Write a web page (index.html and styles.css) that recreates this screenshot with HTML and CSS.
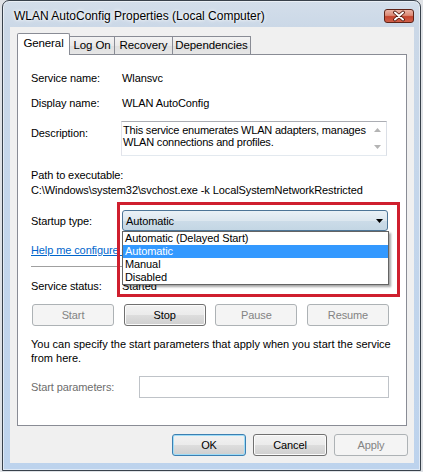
FILE: index.html
```html
<!DOCTYPE html>
<html>
<head>
<meta charset="utf-8">
<title>WLAN AutoConfig Properties</title>
<link rel="stylesheet" href="styles.css">
</head>
<body>
<div class="win">
  <div class="titlebar">
    <div class="title">WLAN AutoConfig Properties (Local Computer)</div>
    <div class="close">
      <svg width="28" height="12" viewBox="0 0 28 12">
        <path d="M10 2.5 L18 9.5 M18 2.5 L10 9.5" stroke="#4a1208" stroke-width="3.6" stroke-linecap="round" fill="none"/>
        <path d="M10 2.5 L18 9.5 M18 2.5 L10 9.5" stroke="#ffffff" stroke-width="2" stroke-linecap="round" fill="none"/>
      </svg>
    </div>
  </div>
  <div class="client">
    <div class="tabs">
      <div class="tab sel t1">General</div>
      <div class="tab t2">Log On</div>
      <div class="tab t3">Recovery</div>
      <div class="tab t4">Dependencies</div>
    </div>
    <div class="panel">
      <div class="row h16"><span class="lbl">Service name:</span><span>Wlansvc</span></div>
      <div class="row h16 r2"><span class="lbl">Display name:</span><span>WLAN AutoConfig</span></div>
      <div class="row desc-row">
        <span class="lbl">Description:</span>
        <div class="desc">
          <div class="desc-text">This service enumerates WLAN adapters, manages<br>WLAN connections and profiles.</div>
          <div class="vscroll">
            <svg width="7" height="4" viewBox="0 0 7 4"><polygon points="0,4 7,4 3.5,0" fill="#b4b4b4"/></svg>
            <svg width="7" height="4" viewBox="0 0 7 4"><polygon points="0,0 7,0 3.5,4" fill="#b4b4b4"/></svg>
          </div>
        </div>
      </div>
      <div class="path">Path to executable:<br>C:\Windows\system32\svchost.exe -k LocalSystemNetworkRestricted</div>
      <div class="row startup">
        <span class="lbl">Startup type:</span>
        <div class="combo">
          <span>Automatic</span>
          <svg width="7" height="4" viewBox="0 0 7 4"><polygon points="0,0 7,0 3.5,4" fill="#000"/></svg>
          <div class="dropdown">
            <div class="opt">Automatic (Delayed Start)</div>
            <div class="opt hl">Automatic</div>
            <div class="opt">Manual</div>
            <div class="opt">Disabled</div>
          </div>
          <div class="redbox"></div>
        </div>
      </div>
      <div class="row h16 help"><span class="link">Help me configure service startup options.</span></div>
      <div class="sep"></div>
      <div class="row h16 status"><span class="lbl">Service status:</span><span>Started</span></div>
      <div class="svc-buttons">
        <div class="btn dis">Start</div>
        <div class="btn">Stop</div>
        <div class="btn dis">Pause</div>
        <div class="btn dis">Resume</div>
      </div>
      <div class="note">You can specify the start parameters that apply when you start the service<br>from here.</div>
      <div class="row params">
        <span class="lbl lbl2">Start parameters:</span>
        <div class="input"></div>
      </div>
    </div>
    <div class="dlg-buttons">
      <div class="btn def">OK</div>
      <div class="btn">Cancel</div>
      <div class="btn dis">Apply</div>
    </div>
  </div>
</div>
</body>
</html>
```

FILE: styles.css
```css
* { box-sizing: border-box; }
html, body { margin: 0; }
body {
  width: 423px;
  height: 472px;
  overflow: hidden;
  background: #dfe2e6;
  font-family: "Liberation Sans", Arial, sans-serif;
  font-size: 11px;
  letter-spacing: -0.1px;
  color: #000;
}
.win {
  margin-left: 2px;
  width: 419px;
  height: 471px;
  border: 1px solid #38414b;
  border-radius: 7px 7px 0 0;
  background: linear-gradient(180deg, #d3deea 0px, #cbd8e7 26px, #c4d6eb 200px, #bdd3ed 100%);
  box-shadow: inset 0 0 0 1px rgba(255,255,255,0.5);
  display: flex;
  flex-direction: column;
}
.titlebar {
  flex: none;
  height: 26px;
  display: flex;
  justify-content: space-between;
  align-items: flex-start;
  padding: 0 6px 0 11px;
}
.title {
  margin-top: 8px;
  font-size: 12px;
  line-height: 14px;
  letter-spacing: 0;
  text-shadow: 0 0 5px #fff, 0 0 3px #fff;
}
.close {
  margin-top: 8px;
  width: 30px;
  height: 14px;
  border: 1px solid #5e2317;
  border-radius: 3px;
  background: linear-gradient(180deg, #ebb3a5 0%, #db8a76 45%, #c4452f 55%, #d0604a 100%);
  display: flex;
}
.client {
  flex: none;
  width: 404px;
  height: 436px;
  margin-left: 7px;
  background: #f0f0f0;
  padding: 6px 7px 0;
}
.tabs {
  position: relative;
  z-index: 2;
  display: flex;
  align-items: flex-end;
  height: 21px;
}
.tab {
  height: 18px;
  margin-left: -1px;
  border: 1px solid #898c95;
  border-bottom: none;
  background: linear-gradient(180deg, #f3f3f3, #e9e9e9 50%, #dfdfdf 51%, #e6e6e6);
  line-height: 16px;
  text-align: center;
  font-size: 11.5px;
}
.tab.sel {
  height: 22px;
  margin-left: 0;
  margin-bottom: -1px;
  background: #fff;
  line-height: 18px;
  border-radius: 2px 2px 0 0;
}
.t1 { width: 53px; }
.t2 { width: 46px; }
.t3 { width: 59px; }
.t4 { width: 79px; }
.panel {
  position: relative;
  height: 372px;
  background: #fff;
  border: 1px solid #898c95;
  padding: 15px 17px 0 13px;
}
.row { display: flex; align-items: center; }
.h16 { height: 16px; }
.lbl { flex: none; width: 91px; }
.r2 { margin-top: 9px; }
.desc-row { margin-top: 10px; align-items: flex-start; }
.desc-row .lbl { padding-top: 4px; line-height: 16px; }
.desc {
  display: flex;
  width: 266px;
  height: 35px;
  margin-left: -1px;
  border: 1px solid;
  border-color: #abadb3 #dbdfe6 #e3e9ef #e2e3ea;
}
.desc-text {
  flex: 1;
  min-width: 0;
  padding: 2px 0 0 1px;
  line-height: 12px;
  letter-spacing: -0.2px;
  white-space: nowrap;
}
.vscroll {
  flex: none;
  width: 17px;
  display: flex;
  flex-direction: column;
  justify-content: space-between;
  align-items: center;
  padding: 6px 0 6px;
}
.path { margin-top: 12px; line-height: 15px; white-space: nowrap; }
.startup { margin-top: 12px; height: 21px; }
.combo {
  position: relative;
  width: 266px;
  height: 21px;
  border: 1px solid #4d7597;
  border-radius: 3px;
  background: linear-gradient(180deg, #eaf1f6 0%, #dce7ef 50%, #ccdce8 51%, #c3d6e4 100%);
  display: flex;
  align-items: center;
  justify-content: space-between;
  padding: 0 4px 0 3px;
}
.dropdown {
  position: absolute;
  left: -1px;
  top: 20px;
  width: 267px;
  height: 54px;
  border: 1px solid #646464;
  background: #fff;
  box-shadow: 2px 2px 2px rgba(0,0,0,0.35);
  z-index: 5;
}
.opt { height: 13px; line-height: 13px; padding-left: 2px; }
.opt.hl { background: #3399ff; color: #fff; }
.redbox {
  position: absolute;
  left: -6px;
  top: -9px;
  width: 283px;
  height: 95px;
  border: 3px solid #cf1f2e;
  z-index: 6;
  pointer-events: none;
}
.help { margin-top: 11px; }
.link { color: #0066cc; text-decoration: underline; white-space: nowrap; }
.sep { margin-top: 8px; height: 1px; background: #a0a0a0; }
.status { margin-top: 11px; }
.svc-buttons {
  margin-top: 10px;
  margin-left: 1px;
  height: 22px;
  display: flex;
  justify-content: space-between;
}
.btn {
  width: 82px;
  height: 22px;
  border: 1px solid #707070;
  border-radius: 3px;
  background: linear-gradient(180deg, #f2f2f2 0%, #ebebeb 50%, #dddddd 51%, #cfcfcf 100%);
  box-shadow: inset 0 0 0 1px #fbfbfb;
  display: flex;
  align-items: center;
  justify-content: center;
}
.btn.dis {
  border-color: #adb2b5;
  background: #f4f4f4;
  box-shadow: none;
  color: #838383;
}
.btn.def {
  border-color: #3c7fb1;
  box-shadow: inset 0 0 0 1px #9fdcf7;
}
.note { margin-top: 11px; line-height: 14px; letter-spacing: 0; white-space: nowrap; }
.params { margin-top: 11px; height: 22px; }
.lbl2 { width: 108px; color: #6d6d6d; }
.input {
  flex: 1;
  height: 22px;
  border: 1px solid #bfc3c8;
  background: #fff;
}
.dlg-buttons {
  margin-top: 8px;
  margin-right: -1px;
  display: flex;
  justify-content: flex-end;
  gap: 7px;
}
.dlg-buttons .btn { width: 74px; }
```
